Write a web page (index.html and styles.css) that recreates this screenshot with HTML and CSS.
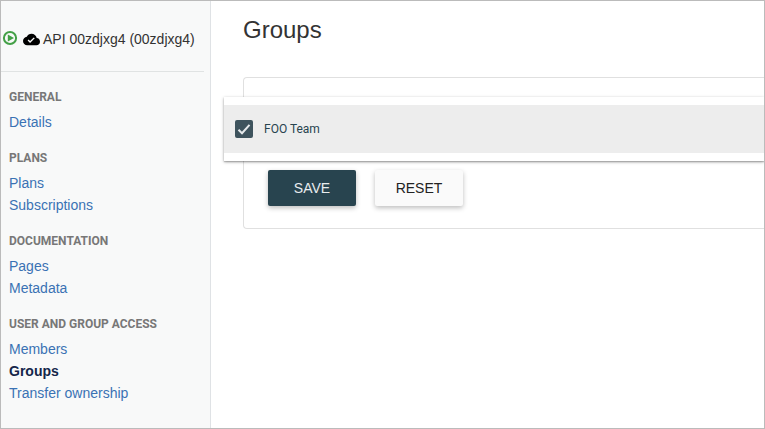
FILE: index.html
```html
<!DOCTYPE html>
<html lang="en">
<head>
<meta charset="utf-8">
<title>Groups</title>
<meta name="viewport" content="width=device-width, initial-scale=1">
<link rel="stylesheet" href="styles.css">
</head>
<body>
<div class="app">
  <aside class="sidebar">
    <div class="api">
      <svg class="api-status" viewBox="0 0 16 16" aria-hidden="true">
        <circle cx="8" cy="8" r="6.1" fill="none" stroke="#43a047" stroke-width="2"/>
        <path d="M5.8 4.4 12 8l-6.2 3.6z" fill="#43a047"/>
      </svg>
      <svg class="api-cloud" viewBox="0 0 24 24" aria-hidden="true">
        <path d="M19.35 10.04C18.67 6.59 15.64 4 12 4 9.11 4 6.6 5.64 5.35 8.04 2.34 8.36 0 10.91 0 14c0 3.31 2.69 6 6 6h13c2.76 0 5-2.24 5-5 0-2.64-2.05-4.78-4.65-4.96zM10 17l-3.5-3.5 1.41-1.41L10 14.17l5.18-5.17 1.41 1.41L10 17z"/>
      </svg>
      <span>API 00zdjxg4 (00zdjxg4)</span>
    </div>
    <nav class="menu">
      <section class="menu-group">
        <h2>GENERAL</h2>
        <a href="#details">Details</a>
      </section>
      <section class="menu-group">
        <h2>PLANS</h2>
        <a href="#plans">Plans</a>
        <a href="#subscriptions">Subscriptions</a>
      </section>
      <section class="menu-group">
        <h2>DOCUMENTATION</h2>
        <a href="#pages">Pages</a>
        <a href="#metadata">Metadata</a>
      </section>
      <section class="menu-group">
        <h2>USER AND GROUP ACCESS</h2>
        <a href="#members">Members</a>
        <a class="active" href="#groups" aria-current="page">Groups</a>
        <a href="#transfer">Transfer ownership</a>
      </section>
    </nav>
  </aside>
  <main class="content">
    <h1>Groups</h1>
    <form class="card">
      <div class="dropdown">
        <label class="option">
          <input type="checkbox" checked>
          <svg class="tick" viewBox="0 0 18 18" aria-hidden="true">
            <path d="M3.5 9.8 7 13.2 14.5 4.8" fill="none" stroke="#e6eaec" stroke-width="2"/>
          </svg>
          <span>FOO Team</span>
        </label>
      </div>
      <div class="actions">
        <button class="button primary" type="submit">SAVE</button>
        <button class="button" type="reset">RESET</button>
      </div>
    </form>
  </main>
</div>
</body>
</html>
```
FILE: styles.css
```css
* {
  box-sizing: border-box;
}

body {
  margin: 0;
  font: 14px/22px "Liberation Sans", Arial, sans-serif;
  color: #333;
  background: #fff;
}

.app {
  display: flex;
  min-height: 100vh;
  border: 1px solid #bbb;
  overflow: hidden;
}

.sidebar {
  flex: none;
  width: 210px;
  padding-right: 6px;
  background: #f8f9f9;
  border-right: 1px solid #dfe2e5;
}

.api {
  display: flex;
  align-items: center;
  height: 71px;
  padding-top: 6px;
  border-bottom: 1px solid #e0e3e3;
  color: #333;
  white-space: nowrap;
}

.api-status {
  width: 16px;
  height: 16px;
  margin: 0 5px 2px 1px;
}

.api-cloud {
  width: 17px;
  height: 17px;
  margin-right: 3px;
  fill: #000;
}

.menu {
  display: flex;
  flex-direction: column;
  gap: 17px;
  padding: 17px 0 17px 8px;
}

.menu-group h2 {
  margin: 0 0 6px;
  font: 700 12px/16px Roboto, sans-serif;
  color: #777;
}

.menu-group a {
  display: block;
  color: #3a72b4;
  text-decoration: none;
}

.menu-group .active {
  color: #14264a;
  font-weight: bold;
}

.content {
  flex: 1;
  min-width: 0;
  padding: 12px 0 0 32px;
}

h1 {
  margin: 0 0 30px;
  font-size: 24px;
  line-height: 34px;
  font-weight: normal;
}

.card {
  position: relative;
  padding: 92px 24px 22px;
  border: 1px solid #e0e0e0;
  border-right: 0;
  border-radius: 4px 0 0 4px;
}

.dropdown {
  position: absolute;
  top: 19px;
  left: -20px;
  right: 0;
  padding: 8px 0;
  background: #fff;
  box-shadow: 0 1px 3px rgba(0, 0, 0, 0.35), 0 1px 1px rgba(0, 0, 0, 0.14);
}

.option {
  display: grid;
  grid-template-columns: 18px 1fr;
  align-items: center;
  column-gap: 11px;
  height: 48px;
  padding-left: 11px;
  background: #ededed;
  color: #28444f;
  font: 12px/16px Roboto, sans-serif;
}

.option input,
.tick {
  grid-area: 1 / 1;
  width: 18px;
  height: 18px;
  margin: 0;
}

.option input {
  appearance: none;
  border: 2px solid #3e535d;
  border-radius: 2px;
}

.option input:checked {
  background: #3e535d;
}

.tick {
  z-index: 1;
  visibility: hidden;
  pointer-events: none;
}

.option input:checked + .tick {
  visibility: visible;
}

.actions {
  display: flex;
  gap: 19px;
}

.button {
  width: 88px;
  height: 36px;
  padding: 0;
  border: 0;
  border-radius: 2px;
  background: #fafafa;
  box-shadow: 0 2px 5px rgba(0, 0, 0, 0.26);
  color: #222;
  font: inherit;
}

.primary {
  background: #28444f;
  color: #e8ecee;
}
```
